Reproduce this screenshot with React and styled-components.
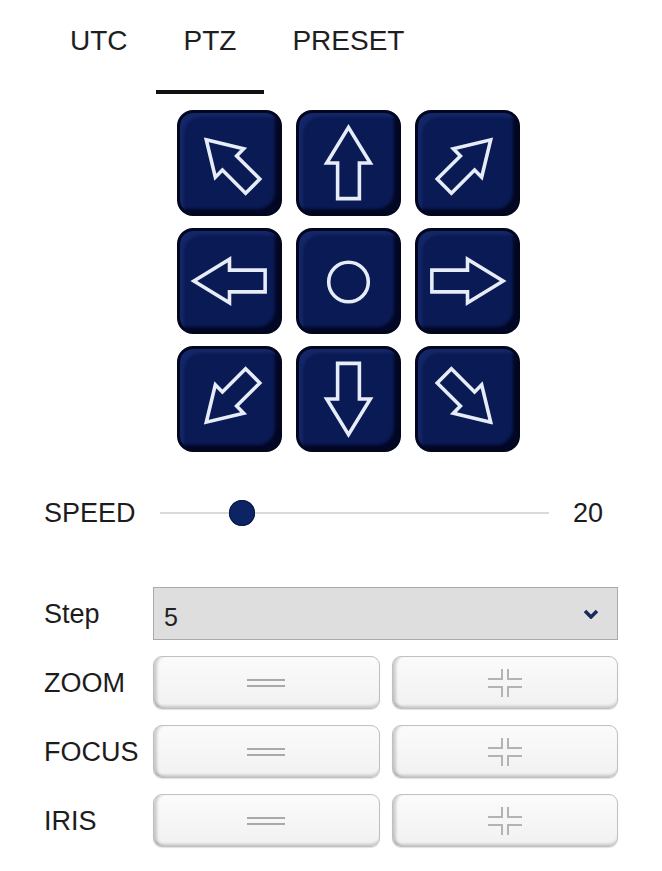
import React from 'react';
import styled, {createGlobalStyle} from 'styled-components';

const GlobalStyle = createGlobalStyle`
  body {
    margin: 0;
    background: #ffffff;
    font-family: "Liberation Sans", Arial, sans-serif;
    color: #1c1c1c;
  }
`;

const Page = styled.div`
  width: 662px;
  height: 871px;
  background: #fff;
  overflow: hidden;
`;

const Tabs = styled.div`
  display: flex;
  padding-left: 42px;
`;

const Tab = styled.div`
  padding: 24px 28px 32px;
  font-size: 28px;
  line-height: 34px;
  color: #1e1e1e;
  border-bottom: 4px solid ${p => (p.active ? '#111' : 'transparent')};
`;

const PadGrid = styled.div`
  display: grid;
  grid-template-columns: repeat(3, 105px);
  grid-auto-rows: 106px;
  column-gap: 14px;
  row-gap: 12px;
  padding-left: 177px;
  margin-top: 16px;
`;

const PadButton = styled.button`
  padding: 0;
  border: 3px solid #02061e;
  border-radius: 16px;
  background: #0a1a54;
  box-shadow:
    inset 8px 8px 3px -4px rgba(28, 50, 120, 0.55),
    inset -8px -8px 3px -4px rgba(0, 3, 25, 0.8);
  display: flex;
  align-items: center;
  justify-content: center;
  cursor: pointer;
  svg {
    width: 100%;
    height: 100%;
  }
`;

const SpeedRow = styled.div`
  display: flex;
  align-items: center;
  height: 40px;
  margin-top: 41px;
  padding: 0 59px 0 44px;
`;

const Label = styled.div`
  flex: 0 0 ${p => p.w}px;
  font-size: 27px;
  line-height: 32px;
  color: #1c1c1c;
`;

const Track = styled.div`
  position: relative;
  flex: 1;
  height: 2px;
  background: #dadada;
`;

const Knob = styled.div`
  position: absolute;
  top: 50%;
  width: 26px;
  height: 26px;
  border-radius: 50%;
  background: #0c2364;
  box-shadow: inset 0 0 0 1px #081848;
  transform: translate(-50%, -50%);
`;

const Value = styled.div`
  margin-left: 24px;
  font-size: 27px;
  line-height: 32px;
`;

const StepRow = styled.div`
  display: flex;
  align-items: center;
  margin-top: 54px;
  padding: 0 44px;
`;

const Select = styled.div`
  flex: 1;
  height: 53px;
  box-sizing: border-box;
  background: #dedede;
  border: 1px solid #aaaaaa;
  display: flex;
  align-items: center;
  justify-content: space-between;
  padding: 7px 18px 0 10px;
  font-size: 25px;
  color: #222;
`;

const Chevron = styled.svg`
  width: 16px;
  height: 10px;
  margin-top: -7px;
`;

const ControlList = styled.div`
  display: flex;
  flex-direction: column;
  gap: 16px;
  margin-top: 16px;
  padding: 0 44px;
`;

const ControlRow = styled.div`
  display: flex;
  align-items: center;
`;

const ButtonPair = styled.div`
  flex: 1;
  display: grid;
  grid-template-columns: 1fr 1fr;
  gap: 12px;
`;

const LightButton = styled.button`
  height: 53px;
  padding: 0;
  border: 1px solid #c0c0c0;
  border-radius: 9px;
  background: linear-gradient(#fbfbfb, #f1f1f1);
  box-shadow:
    inset 5px 0 3px -2px rgba(0, 0, 0, 0.18),
    inset 0 -4px 3px -2px rgba(0, 0, 0, 0.18),
    0 1px 1px rgba(0, 0, 0, 0.12);
  display: flex;
  align-items: center;
  justify-content: center;
  cursor: pointer;
`;

const ARROW = '50,14 72,50 61,50 61,86 39,86 39,50 28,50';

const Arrow = ({angle, scale = 1}) => (
  <svg viewBox="0 0 100 100">
    <g transform={`rotate(${angle} 50 50) translate(50 50) scale(${scale}) translate(-50 -50)`}>
      <polygon
        points={ARROW}
        fill="none"
        stroke="#e6edf8"
        strokeWidth={3.6 / scale}
        strokeLinejoin="miter"
      />
    </g>
  </svg>
);

const Home = () => (
  <svg viewBox="0 0 100 100">
    <circle cx="50" cy="51" r="20" fill="none" stroke="#e6edf8" strokeWidth="3.6" />
  </svg>
);

const MinusIcon = () => (
  <svg width="38" height="10" viewBox="0 0 38 10">
    <path d="M0 2 H38 M0 8 H38" stroke="#a9a9a9" strokeWidth="2" />
  </svg>
);

const PlusIcon = () => (
  <svg width="36" height="30" viewBox="0 0 36 30">
    <path
      d="M1 11 H15 V1 M21 1 V11 H35 M1 19 H15 V29 M21 29 V19 H35"
      fill="none"
      stroke="#b3b3b3"
      strokeWidth="2"
    />
  </svg>
);

const pad = [
  {key: 'nw', angle: -45, scale: 0.92},
  {key: 'n', angle: 0},
  {key: 'ne', angle: 45, scale: 0.92},
  {key: 'w', angle: -90},
  {key: 'home'},
  {key: 'e', angle: 90},
  {key: 'sw', angle: -135, scale: 0.92},
  {key: 's', angle: 180},
  {key: 'se', angle: 135, scale: 0.92},
];

const controls = ['ZOOM', 'FOCUS', 'IRIS'];

const App = () => {
  const speed = 20;
  const pct = 21 * (speed / 20);

  return (
    <>
      <GlobalStyle />
      <Page>
        <Tabs>
          <Tab>UTC</Tab>
          <Tab active>PTZ</Tab>
          <Tab>PRESET</Tab>
        </Tabs>

        <PadGrid>
          {pad.map(b => (
            <PadButton key={b.key}>
              {b.key === 'home' ? <Home /> : <Arrow angle={b.angle} scale={b.scale} />}
            </PadButton>
          ))}
        </PadGrid>

        <SpeedRow>
          <Label w={116}>SPEED</Label>
          <Track>
            <Knob style={{left: `${pct}%`}} />
          </Track>
          <Value>{speed}</Value>
        </SpeedRow>

        <StepRow>
          <Label w={109}>Step</Label>
          <Select>
            5
            <Chevron viewBox="0 0 16 10">
              <polyline points="2,2 8,8 14,2" fill="none" stroke="#1b2a5c" strokeWidth="3.5" />
            </Chevron>
          </Select>
        </StepRow>

        <ControlList>
          {controls.map(c => (
            <ControlRow key={c}>
              <Label w={109}>{c}</Label>
              <ButtonPair>
                <LightButton><MinusIcon /></LightButton>
                <LightButton><PlusIcon /></LightButton>
              </ButtonPair>
            </ControlRow>
          ))}
        </ControlList>
      </Page>
    </>
  );
};

export default App;
